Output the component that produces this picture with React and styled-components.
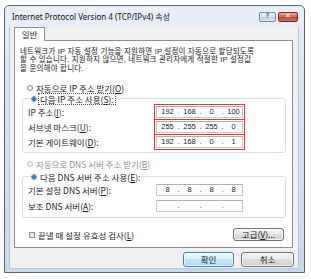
import React from "react";
import styled, { createGlobalStyle } from "styled-components";

const Global = createGlobalStyle`
  html, body { margin: 0; padding: 0; background: #ffffff; }
  body { font-family: "Noto Sans CJK KR", "Noto Sans", sans-serif; color: #1a1a1a; }
  * { box-sizing: border-box; }
`;

const Stage = styled.div`
  padding: 5px 0 0 4px;
`;

const Window = styled.div`
  width: 301px;
  height: 268px;
  border: 1px solid #56667a;
  border-radius: 5px 5px 0 0;
  background: linear-gradient(180deg, #e9f0f8 0%, #d8e4f2 30%, #c9d9ed 100%);
  display: flex;
  flex-direction: column;
`;

const TitleBar = styled.div`
  height: 21px;
  display: flex;
  align-items: center;
  padding: 0 6px 0 7px;
`;

const Title = styled.div`
  flex: 1;
  font-family: "Noto Sans", "Noto Sans CJK KR", sans-serif;
  font-size: 8px;
  color: #111;
  white-space: nowrap;
`;

const CaptionButton = styled.div`
  width: ${(p) => p.$w}px;
  height: 10px;
  margin-left: 2px;
  border: 1px solid ${(p) => (p.$close ? "#7a2d24" : "#7489a3")};
  border-radius: 2px;
  background: ${(p) =>
    p.$close
      ? "linear-gradient(180deg, #eaa597 0%, #d86a59 45%, #c2402f 55%, #d5715f 100%)"
      : "linear-gradient(180deg, #f1f5fa 0%, #dbe5f1 45%, #c6d5e7 55%, #d6e2ef 100%)"};
  display: flex;
  align-items: center;
  justify-content: center;
  font-family: "DejaVu Sans", sans-serif;
  font-size: 7px;
  font-weight: bold;
  line-height: 1;
  color: ${(p) => (p.$close ? "#ffffff" : "#6b7b90")};
`;

const Client = styled.div`
  flex: 1;
  margin: 0 5px 3px 4px;
  background: #f0f0f0;
  border: 1px solid #b7c6d8;
  border-top: none;
  padding: 0 5px 0 4px;
  display: flex;
  flex-direction: column;
`;

const TabStrip = styled.div`
  display: flex;
`;

const Tab = styled.div`
  position: relative;
  z-index: 1;
  width: 31px;
  height: 14px;
  margin-bottom: -1px;
  background: #ffffff;
  border: 1px solid #898c95;
  border-bottom: none;
  font-size: 8.5px;
  line-height: 12px;
  text-align: center;
`;

const Panel = styled.div`
  height: 208px;
  background: #ffffff;
  border: 1px solid #898c95;
  padding: 7px 3px 0 5px;
  display: flex;
  flex-direction: column;
`;

const Para = styled.p`
  margin: 0;
  font-family: "Liberation Sans", "Noto Sans CJK KR", sans-serif;
  font-size: 7.5px;
  line-height: 8.4px;
  letter-spacing: 0.2px;
  white-space: nowrap;
`;

const RadioRow = styled.div`
  display: flex;
  align-items: center;
  height: 11px;
  margin: ${(p) => p.$m || "0"};
  font-size: 8.5px;
  color: ${(p) => (p.$disabled ? "#8f8f8f" : "#1a1a1a")};
  white-space: nowrap;
`;

const RadioDot = styled.span`
  width: 6px;
  height: 6px;
  border-radius: 50%;
  border: 1px solid ${(p) => (p.$disabled ? "#c4c4c4" : "#8b8d90")};
  background: ${(p) =>
    p.$on
      ? "radial-gradient(circle, #2f7bd0 0 1.6px, #9fc6ef 2px, #f4f4f4 2.4px)"
      : "linear-gradient(135deg, #e6e6e6, #fbfbfb)"};
  margin-right: 2px;
  flex: none;
`;

const RadioText = styled.span`
  line-height: 10px;
  padding: 0 1px;
  outline: ${(p) => (p.$focus ? "1px dotted #555" : "none")};
`;

const Group = styled.fieldset`
  margin: 0 3px 0 2px;
  padding: 0 42px ${(p) => p.$pb}px 5px;
  border: 1px solid #d5dfe5;
  border-radius: 3px;
  min-width: 0;
`;

const Legend = styled.legend`
  padding: 0;
  margin-left: 3px;
  background: #ffffff;
`;

const FieldRow = styled.div`
  display: flex;
  align-items: center;
  justify-content: space-between;
  height: ${(p) => p.$h}px;
  font-size: 8.5px;
  white-space: nowrap;
`;

const IpBox = styled.div`
  width: 87px;
  height: 12px;
  border: 1px solid #c5cad1;
  border-top-color: #abadb3;
  background: #ffffff;
  display: grid;
  grid-template-columns: 17px 5px 17px 5px 17px 5px 17px;
  padding-left: 2px;
  align-items: center;
  font-family: "Liberation Sans", sans-serif;
  font-size: 7.5px;
  line-height: 10px;
  color: #222;
  outline: ${(p) => (p.$mark ? "1.5px solid #e3342b" : "none")};
  outline-offset: 1px;
`;

const Seg = styled.span`
  text-align: center;
`;

const BottomRow = styled.div`
  display: flex;
  align-items: center;
  height: 13px;
  margin: 10px 5px 0 9px;
  font-size: 8.5px;
  white-space: nowrap;
`;

const Check = styled.span`
  width: 6px;
  height: 6px;
  border: 1px solid #8e8f8f;
  background: linear-gradient(135deg, #dcdcdc, #f7f7f7);
  margin-right: 3px;
  flex: none;
`;

const Spacer = styled.div`
  flex: 1;
`;

const Button = styled.div`
  width: ${(p) => p.$w}px;
  height: ${(p) => p.$h}px;
  border: 1px solid ${(p) => (p.$default ? "#3c7fb1" : "#707070")};
  border-radius: 3px;
  background: ${(p) =>
    p.$default
      ? "linear-gradient(180deg, #eaf6fd 0%, #d9f0fc 50%, #bee6fd 50%, #a7d9f5 100%)"
      : "linear-gradient(180deg, #f2f2f2 0%, #ebebeb 50%, #dddddd 50%, #cfcfcf 100%)"};
  box-shadow: inset 0 0 0 1px rgba(255, 255, 255, 0.7);
  display: flex;
  align-items: center;
  justify-content: center;
  font-size: 8.5px;
  line-height: 1;
  color: #1a1a1a;
  white-space: nowrap;
`;

const ButtonRow = styled.div`
  display: flex;
  justify-content: flex-end;
  gap: 7px;
  padding-top: 4px;
  margin-right: -1px;
`;

function Ip({ v, mark }) {
  return (
    <IpBox $mark={mark}>
      <Seg>{v[0]}</Seg>
      <Seg>.</Seg>
      <Seg>{v[1]}</Seg>
      <Seg>.</Seg>
      <Seg>{v[2]}</Seg>
      <Seg>.</Seg>
      <Seg>{v[3]}</Seg>
    </IpBox>
  );
}

export default function App() {
  return (
    <>
      <Global />
      <Stage>
        <Window>
          <TitleBar>
            <Title>Internet Protocol Version 4 (TCP/IPv4) 속성</Title>
            <CaptionButton $w={17}>?</CaptionButton>
            <CaptionButton $w={20} $close>
              ✕
            </CaptionButton>
          </TitleBar>
          <Client>
            <TabStrip>
              <Tab>일반</Tab>
            </TabStrip>
            <Panel>
              <Para>
                네트워크가 IP 자동 설정 기능을 지원하면 IP 설정이 자동으로 할당되도록
                <br />
                할 수 있습니다. 지원하지 않으면, 네트워크 관리자에게 적절한 IP 설정값
                <br />을 문의해야 합니다.
              </Para>
              <RadioRow $m="9px 0 0 7px">
                <RadioDot />
                <RadioText>
                  자동으로 IP 주소 받기(<u>O</u>)
                </RadioText>
              </RadioRow>
              <Group $pb={3}>
                <Legend>
                  <RadioRow>
                    <RadioDot $on />
                    <RadioText $focus>
                      다음 IP 주소 사용(<u>S</u>):
                    </RadioText>
                  </RadioRow>
                </Legend>
                <FieldRow $h={15}>
                  <span>
                    IP 주소(<u>I</u>):
                  </span>
                  <Ip v={["192", "168", "0", "100"]} mark />
                </FieldRow>
                <FieldRow $h={15}>
                  <span>
                    서브넷 마스크(<u>U</u>):
                  </span>
                  <Ip v={["255", "255", "255", "0"]} mark />
                </FieldRow>
                <FieldRow $h={15}>
                  <span>
                    기본 게이트웨이(<u>D</u>):
                  </span>
                  <Ip v={["192", "168", "0", "1"]} mark />
                </FieldRow>
              </Group>
              <RadioRow $m="5px 0 2px 7px" $disabled>
                <RadioDot $disabled />
                <RadioText>
                  자동으로 DNS 서버 주소 받기(<u>B</u>)
                </RadioText>
              </RadioRow>
              <Group $pb={3}>
                <Legend>
                  <RadioRow>
                    <RadioDot $on />
                    <RadioText>
                      다음 DNS 서버 주소 사용(<u>E</u>):
                    </RadioText>
                  </RadioRow>
                </Legend>
                <FieldRow $h={16}>
                  <span>
                    기본 설정 DNS 서버(<u>P</u>):
                  </span>
                  <Ip v={["8", "8", "8", "8"]} />
                </FieldRow>
                <FieldRow $h={16}>
                  <span>
                    보조 DNS 서버(<u>A</u>):
                  </span>
                  <Ip v={["", "", "", ""]} />
                </FieldRow>
              </Group>
              <BottomRow>
                <Check />
                <span>
                  끝낼 때 설정 유효성 검사(<u>L</u>)
                </span>
                <Spacer />
                <Button $w={51} $h={13}>
                  고급(<u>V</u>)...
                </Button>
              </BottomRow>
            </Panel>
            <ButtonRow>
              <Button $w={51} $h={15} $default>
                확인
              </Button>
              <Button $w={53} $h={15}>
                취소
              </Button>
            </ButtonRow>
          </Client>
        </Window>
      </Stage>
    </>
  );
}
